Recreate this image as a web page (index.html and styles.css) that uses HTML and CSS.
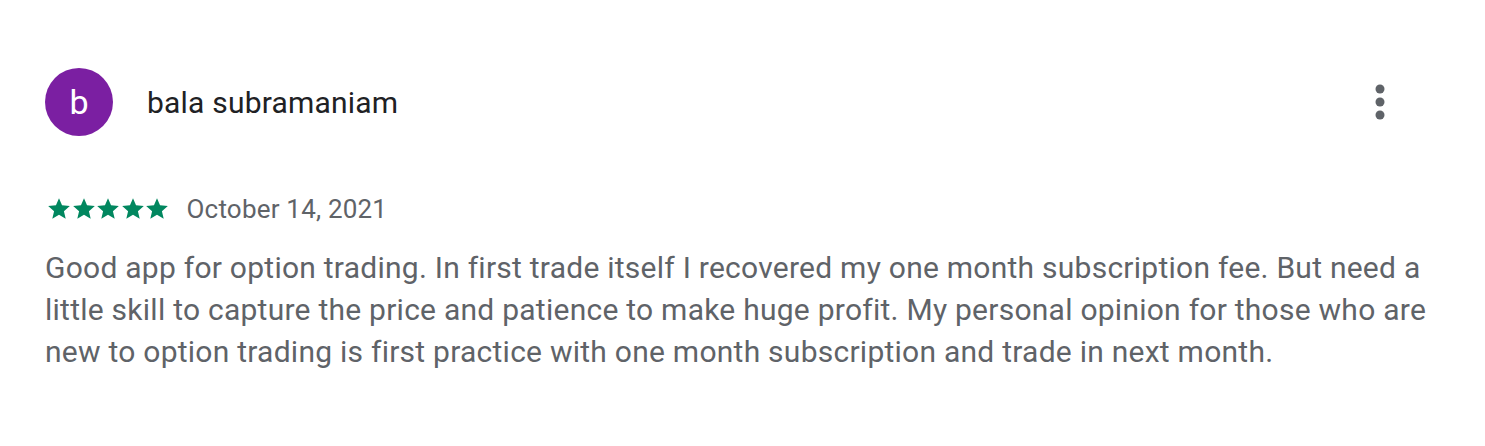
FILE: index.html
```html
<!DOCTYPE html>
<html>
<head>
<meta charset="utf-8">
<link rel="stylesheet" href="styles.css">
</head>
<body>
<div class="review">
  <header class="head">
    <div class="avatar">b</div>
    <div class="name">bala subramaniam</div>
    <button class="more" aria-label="More">
      <svg width="12" height="36" viewBox="0 0 12 36"><circle cx="6" cy="5" r="4.5" fill="#5f6368"/><circle cx="6" cy="18" r="4.5" fill="#5f6368"/><circle cx="6" cy="31" r="4.5" fill="#5f6368"/></svg>
    </button>
  </header>
  <div class="meta">
    <div class="stars">
      <svg viewBox="0 0 24 24"><path d="M12 17.27L18.18 21l-1.64-7.03L22 9.24l-7.19-.61L12 2 9.19 8.63 2 9.24l5.46 4.73L5.82 21z"/></svg>
      <svg viewBox="0 0 24 24"><path d="M12 17.27L18.18 21l-1.64-7.03L22 9.24l-7.19-.61L12 2 9.19 8.63 2 9.24l5.46 4.73L5.82 21z"/></svg>
      <svg viewBox="0 0 24 24"><path d="M12 17.27L18.18 21l-1.64-7.03L22 9.24l-7.19-.61L12 2 9.19 8.63 2 9.24l5.46 4.73L5.82 21z"/></svg>
      <svg viewBox="0 0 24 24"><path d="M12 17.27L18.18 21l-1.64-7.03L22 9.24l-7.19-.61L12 2 9.19 8.63 2 9.24l5.46 4.73L5.82 21z"/></svg>
      <svg viewBox="0 0 24 24"><path d="M12 17.27L18.18 21l-1.64-7.03L22 9.24l-7.19-.61L12 2 9.19 8.63 2 9.24l5.46 4.73L5.82 21z"/></svg>
    </div>
    <span class="date">October 14, 2021</span>
  </div>
  <p class="text">Good app for option trading. In first trade itself I recovered my one month subscription fee. But need a little skill to capture the price and patience to make huge profit. My personal opinion for those who are new to option trading is first practice with one month subscription and trade in next month.</p>
</div>
</body>
</html>
```

FILE: styles.css
```css
html, body {
  margin: 0;
  padding: 0;
  background: #ffffff;
}
body {
  font-family: Roboto, "Liberation Sans", Arial, sans-serif;
  width: 1485px;
  height: 446px;
  overflow: hidden;
}
.review {
  padding: 68px 0 0 45px;
  width: 1395px;
}
.head {
  display: flex;
  align-items: center;
  height: 68px;
}
.avatar {
  width: 68px;
  height: 68px;
  border-radius: 50%;
  background: #7b1fa2;
  color: #ffffff;
  font-size: 34px;
  display: flex;
  align-items: center;
  justify-content: center;
  flex: none;
}
.name {
  margin-left: 34px;
  font-size: 30px;
  letter-spacing: 0.2px;
  color: #202124;
  flex: 1;
}
.more {
  border: 0;
  background: none;
  padding: 0;
  margin-right: 54px;
  display: flex;
}
.meta {
  display: flex;
  align-items: center;
  margin-top: 58px;
  height: 30px;
}
.stars {
  display: flex;
  margin-left: 1px;
}
.stars svg {
  width: 26px;
  height: 26px;
  fill: #01875f;
  margin-right: -1.5px;
}
.date {
  margin-left: 18px;
  font-size: 26px;
  letter-spacing: 0.2px;
  color: #5f6368;
}
.text {
  margin: 23px 0 0 0;
  font-size: 30px;
  letter-spacing: 0.25px;
  line-height: 42px;
  color: #5f6368;
}
```
